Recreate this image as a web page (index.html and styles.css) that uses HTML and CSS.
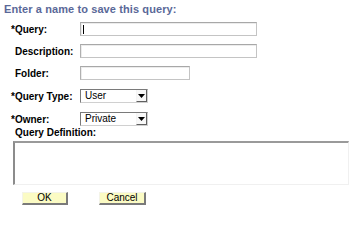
FILE: index.html
```html
<!DOCTYPE html>
<html>
<head>
<meta charset="utf-8">
<link rel="stylesheet" href="styles.css">
</head>
<body>
<div class="page">
  <div class="title">Enter a name to save this query:</div>
  <div class="rows">
    <div class="row">
      <div class="label"><span class="req">*</span>Query:</div>
      <div class="field wide"><span class="caret"></span></div>
    </div>
    <div class="row">
      <div class="label">Description:</div>
      <div class="field wide"></div>
    </div>
    <div class="row">
      <div class="label">Folder:</div>
      <div class="field short"></div>
    </div>
    <div class="row sel">
      <div class="label"><span class="req">*</span>Query Type:</div>
      <div class="select"><span class="val">User</span><span class="arrow"><svg width="7" height="4" viewBox="0 0 7 4"><path d="M0 0H7L3.5 4Z" fill="#000"/></svg></span></div>
    </div>
    <div class="row sel">
      <div class="label"><span class="req">*</span>Owner:</div>
      <div class="select"><span class="val">Private</span><span class="arrow"><svg width="7" height="4" viewBox="0 0 7 4"><path d="M0 0H7L3.5 4Z" fill="#000"/></svg></span></div>
    </div>
  </div>
  <div class="deflabel">Query Definition:</div>
  <div class="textarea"></div>
  <div class="buttons">
    <div class="btn">OK</div>
    <div class="btn cancel">Cancel</div>
  </div>
</div>
</body>
</html>
```
FILE: styles.css
```css
html, body {
  margin: 0;
  padding: 0;
  background: #fff;
}
.page {
  font-family: "Liberation Sans", Arial, sans-serif;
  color: #000;
  display: flex;
  flex-direction: column;
  width: 355px;
  height: 210px;
  overflow: hidden;
}
.title {
  margin: 3px 0 0 4px;
  font-size: 11px;
  line-height: 13px;
  font-weight: bold;
  color: #5a6898;
  letter-spacing: 0.1px;
}
.rows {
  display: flex;
  flex-direction: column;
  gap: 8px;
  margin-top: 6px;
}
.row {
  display: flex;
  align-items: center;
  height: 14px;
}
.row.sel {
  margin-top: 1px;
}
.label {
  width: 65px;
  padding-left: 15px;
  font-size: 10px;
  font-weight: bold;
  line-height: 12px;
  padding-top: 2px;
}
.req {
  margin-left: -4px;
}
.field {
  box-sizing: border-box;
  height: 14px;
  border: 1px solid #c4c4c4;
  border-top-color: #a8a8a8;
  border-left-color: #b0b0b0;
  box-shadow: inset 1px 1px 0 #ececec;
  display: flex;
  align-items: center;
  padding-left: 2px;
}
.field.wide {
  width: 177px;
}
.field.short {
  width: 110px;
}
.caret {
  width: 1px;
  height: 9px;
  background: #000;
}
.select {
  box-sizing: border-box;
  width: 68px;
  height: 14px;
  border: 1px solid #d0d0d0;
  border-top-color: #7a7a7a;
  border-left-color: #7a7a7a;
  display: flex;
  align-items: center;
  justify-content: space-between;
  font-size: 10px;
}
.val {
  padding-left: 4px;
  line-height: 12px;
}
.arrow {
  box-sizing: border-box;
  width: 11px;
  height: 12px;
  border-right: 1px solid #606060;
  border-bottom: 1px solid #606060;
  border-left: 1px solid #f4f4f4;
  background: #f8f8f8;
  display: flex;
  align-items: center;
  justify-content: center;
}
.deflabel {
  margin: 1px 0 0 15px;
  font-size: 10px;
  font-weight: bold;
  line-height: 12px;
}
.textarea {
  box-sizing: border-box;
  margin: 2px 0 0 13px;
  width: 336px;
  height: 44px;
  border-top: 2px solid #9a9a9a;
  border-left: 2px solid #8c8c8c;
  border-right: 1px solid #f0f0f0;
  border-bottom: 1px solid #f0f0f0;
}
.buttons {
  display: flex;
  gap: 31px;
  margin: 7px 0 0 22px;
}
.btn {
  box-sizing: border-box;
  width: 46px;
  height: 13px;
  background: #fbfbc4;
  border-top: 1px solid #f4f4e8;
  border-left: 1px solid #f4f4e8;
  border-right: 2px solid #7a7a7a;
  border-bottom: 2px solid #7a7a7a;
  font-size: 10px;
  line-height: 10px;
  text-align: center;
}
.btn.cancel {
  width: 47px;
}
```
